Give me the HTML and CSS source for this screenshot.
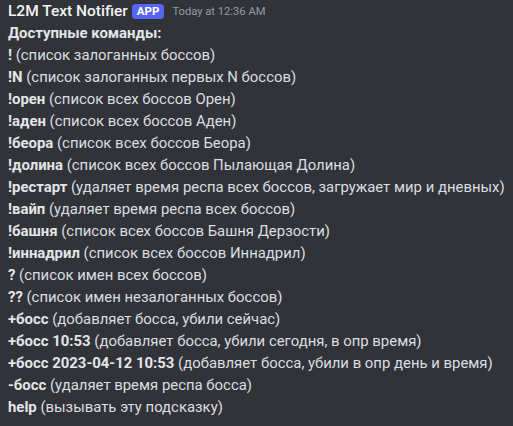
FILE: index.html
```html
<!DOCTYPE html>
<html>
<head>
<meta charset="utf-8">
<link rel="stylesheet" href="styles.css">
</head>
<body>
<div class="msg">
  <div class="header">
    <span class="name">L2M Text Notifier</span>
    <span class="badge">APP</span>
    <span class="time">Today at 12:36 AM</span>
  </div>
  <div class="content">
    <div><b>Доступные команды:</b></div>
    <div><b>!</b> (список залоганных боссов)</div>
    <div><b>!N</b> (список залоганных первых N боссов)</div>
    <div><b>!орен</b> (список всех боссов Орен)</div>
    <div><b>!аден</b> (список всех боссов Аден)</div>
    <div><b>!беора</b> (список всех боссов Беора)</div>
    <div><b>!долина</b> (список всех боссов Пылающая Долина)</div>
    <div><b>!рестарт</b> (удаляет время респа всех боссов, загружает мир и дневных)</div>
    <div><b>!вайп</b> (удаляет время респа всех боссов)</div>
    <div><b>!башня</b> (список всех боссов Башня Дерзости)</div>
    <div><b>!иннадрил</b> (список всех боссов Иннадрил)</div>
    <div><b>?</b> (список имен всех боссов)</div>
    <div><b>??</b> (список имен незалоганных боссов)</div>
    <div><b>+босс</b> (добавляет босса, убили сейчас)</div>
    <div><b>+босс 10:53</b> (добавляет босса, убили сегодня, в опр время)</div>
    <div><b>+босс 2023-04-12 10:53</b> (добавляет босса, убили в опр день и время)</div>
    <div><b>-босс</b> (удаляет время респа босса)</div>
    <div><b>help</b> (вызывать эту подсказку)</div>
  </div>
</div>
</body>
</html>
```
FILE: styles.css
```css
html, body {
  margin: 0;
  padding: 0;
  background: #313338;
}
body {
  font-family: Roboto, "Noto Sans", sans-serif;
  color: #dbdee1;
}
.msg {
  padding: 0 0 0 8px;
}
.header {
  display: flex;
  align-items: center;
  height: 22px;
  white-space: nowrap;
}
.name {
  font-size: 15.5px;
  font-weight: 500;
  color: #f2f3f5;
}
.badge {
  margin-left: 4px;
  background: #5865f2;
  color: #fff;
  font-size: 11.5px;
  font-weight: 700;
  padding: 0 5px;
  height: 15px;
  line-height: 15px;
  border-radius: 4px;
}
.time {
  margin-left: 8px;
  font-size: 11.2px;
  color: #949ba4;
}
.content {
  font-size: 14.9px;
  line-height: 22px;
  white-space: nowrap;
}
.content b {
  font-weight: 700;
  color: #e3e5e8;
}
```
